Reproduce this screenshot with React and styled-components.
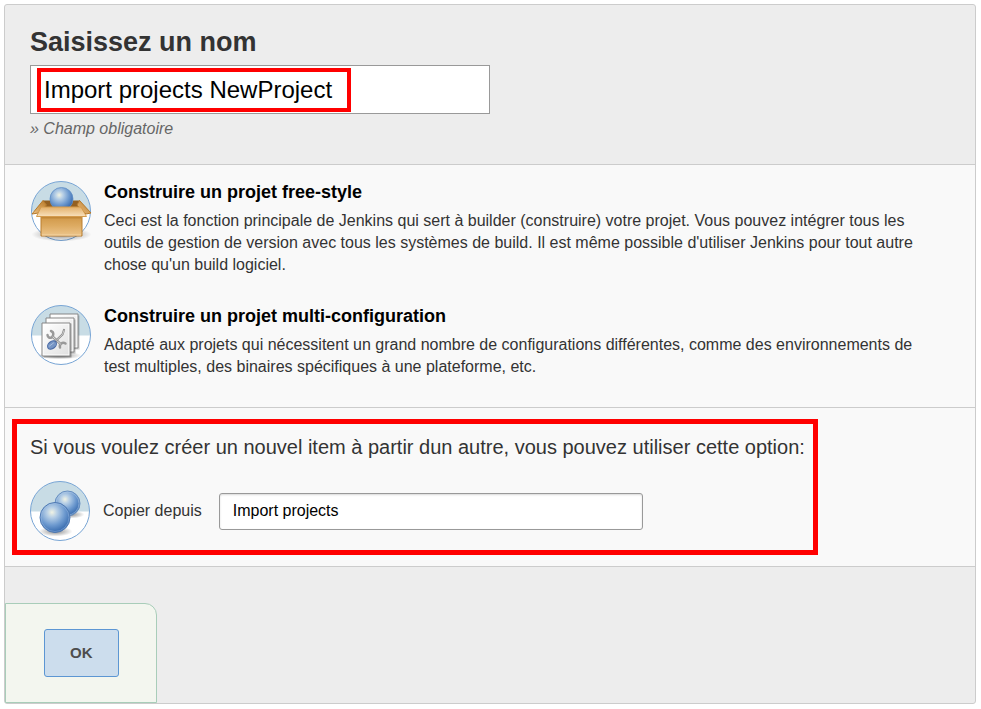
import React, { useState } from "react";
import styled, { createGlobalStyle } from "styled-components";

const items = [
  {
    id: "freestyle",
    name: "Construire un projet free-style",
    text: "Ceci est la fonction principale de Jenkins qui sert à builder (construire) votre projet. Vous pouvez intégrer tous les outils de gestion de version avec tous les systèmes de build. Il est même possible d'utiliser Jenkins pour tout autre chose qu'un build logiciel.",
    icon: <BoxIcon />,
  },
  {
    id: "matrix",
    name: "Construire un projet multi-configuration",
    text: "Adapté aux projets qui nécessitent un grand nombre de configurations différentes, comme des environnements de test multiples, des binaires spécifiques à une plateforme, etc.",
    icon: <PagesIcon />,
  },
];

function Disc({ id, children }) {
  return (
    <Icon viewBox="0.5 0.5 60 60" aria-hidden="true">
      <defs>
        <clipPath id={`${id}-clip`}>
          <circle cx="30.5" cy="30.5" r="29.5" />
        </clipPath>
        <radialGradient id={`${id}-ball`} cx="0.4" cy="0.33" r="0.68">
          <stop offset="0" stopColor="#f1f3e4" />
          <stop offset="0.25" stopColor="#b7cfe6" />
          <stop offset="0.62" stopColor="#6f9bd0" />
          <stop offset="1" stopColor="#3468ad" />
        </radialGradient>
        <radialGradient id={`${id}-shadow`}>
          <stop offset="0" stopColor="#000" stopOpacity="0.45" />
          <stop offset="1" stopColor="#000" stopOpacity="0" />
        </radialGradient>
      </defs>
      <g clipPath={`url(#${id}-clip)`}>
        <rect width="62" height="62" fill="#fff" />
        <rect width="62" height="31" fill="#c8dce5" />
      </g>
      <circle cx="30.5" cy="30.5" r="29.5" fill="none" stroke="#78a5d5" />
      {children}
    </Icon>
  );
}

function BoxIcon() {
  return (
    <Disc id="box">
      <defs>
        <linearGradient id="box-front" x1="0" y1="0" x2="0" y2="1">
          <stop offset="0" stopColor="#cf9544" />
          <stop offset="0.5" stopColor="#ddab62" />
          <stop offset="1" stopColor="#edc58c" />
        </linearGradient>
        <linearGradient id="box-flap" x1="0" y1="0" x2="0" y2="1">
          <stop offset="0" stopColor="#e3b06a" />
          <stop offset="1" stopColor="#f8e0bc" />
        </linearGradient>
        <linearGradient id="box-side" x1="1" y1="0" x2="0" y2="1">
          <stop offset="0" stopColor="#b97a28" />
          <stop offset="1" stopColor="#ecc084" />
        </linearGradient>
      </defs>
      <ellipse cx="31" cy="54" rx="30" ry="7" fill="url(#box-shadow)" />
      <path d="M12.5 20h37l2 8h-41z" fill="#946021" />
      <path d="M12.5 20l-11 13.500 6.500-1 8-8z" fill="url(#box-side)" stroke="#b57a2c" />
      <path d="M49 20l11.500 12.500-5 1-9-9z" fill="url(#box-side)" stroke="#b57a2c" />
      <circle cx="31" cy="18.500" r="11.500" fill="url(#box-ball)" stroke="#618fc7" strokeWidth="0.8" />
      <path d="M10.500 35h41v20.500h-41z" fill="url(#box-front)" stroke="#b97f30" />
      <path d="M11.500 54.500h39" stroke="#f3d4a5" />
      <path d="M11.500 36h39v2h-39z" fill="#b77c2d" opacity="0.6" />
      <path d="M10.500 26.500h40l5.500 9.500h-50z" fill="url(#box-flap)" stroke="#d49b4d" />
    </Disc>
  );
}

function PagesIcon() {
  return (
    <Disc id="pages">
      <defs>
        <linearGradient id="pages-paper" x1="0" y1="0" x2="1" y2="1">
          <stop offset="0" stopColor="#fff" />
          <stop offset="1" stopColor="#e1e1e1" />
        </linearGradient>
      </defs>
      <ellipse cx="29" cy="51" rx="22" ry="4" fill="url(#pages-shadow)" />
      <g stroke="#858585" fill="#fff">
        <path d="M21 11h28v34H21z" stroke="none" fill="#000" opacity="0.2" />
        <path d="M19.500 9.500h28v34h-28z" />
        <path d="M21 11h25v31H21z" stroke="none" fill="url(#pages-paper)" />
        <path d="M17 15h28v34H17z" stroke="none" fill="#000" opacity="0.25" />
        <path d="M15.500 13.500h28v34h-28z" />
        <path d="M17 15h25v31H17z" stroke="none" fill="url(#pages-paper)" />
        <path d="M13 19h28v34H13z" stroke="none" fill="#000" opacity="0.3" />
        <path d="M11.500 18.500h28v33h-28z" />
        <path d="M13 20h25v30H13z" stroke="none" fill="url(#pages-paper)" />
      </g>
      <g fill="none" strokeLinecap="round">
        <path
          d="M20.500 26.500c3 1 3 5 .5 6.500-2 .8-3.800-.4-4-2.500M22.500 32.500l7.500 7M29.500 43c-1-3.500 2.500-6 5.500-4"
          stroke="#999"
          strokeWidth="2.500"
        />
        <path d="M22.500 32.500l7.500 7" stroke="#d9d9d9" />
        <path d="M23 38.500l9-8.500 1.500-4.500" stroke="#8a8a8a" strokeWidth="2.200" />
        <path d="M24 37.500l8-7.500 1.500-4" stroke="#ddd" strokeWidth="0.800" />
      </g>
      <ellipse
        cx="21.500"
        cy="40.500"
        rx="5"
        ry="3.500"
        transform="rotate(-38 21.500 40.500)"
        fill="#7695c5"
        stroke="#4a6aa5"
      />
      <path d="M19 41.500l4-3" stroke="#a9bfdf" strokeLinecap="round" />
    </Disc>
  );
}

function CopyIcon() {
  return (
    <Disc id="copy">
      <ellipse cx="41" cy="34" rx="14" ry="4" fill="url(#copy-shadow)" />
      <circle cx="38" cy="23" r="12.500" fill="url(#copy-ball)" stroke="#658dbf" />
      <circle cx="38" cy="23" r="11.500" fill="none" stroke="#b8cfe9" opacity="0.5" />
      <ellipse cx="26" cy="51" rx="17" ry="5" fill="url(#copy-shadow)" />
      <circle cx="25.500" cy="37" r="15" fill="url(#copy-ball)" stroke="#4e79b2" />
      <circle cx="25.500" cy="37" r="14" fill="none" stroke="#a9c6e8" opacity="0.4" />
    </Disc>
  );
}

const NewItem = () => {
  const [name, setName] = useState("Import projects NewProject");
  const [from, setFrom] = useState("Import projects");

  return (
    <>
      <GlobalStyle />
      <Panel onSubmit={(e) => e.preventDefault()}>
        <NameSection>
          <Title htmlFor="name">Saisissez un nom</Title>
          <NameField>
            <NameInput
              id="name"
              type="text"
              autoComplete="off"
              spellCheck={false}
              value={name}
              onChange={(e) => setName(e.target.value)}
            />
            <Highlight />
          </NameField>
          <Hint>» Champ obligatoire</Hint>
        </NameSection>
        <Categories>
          {items.map((elm) => (
            <Item key={elm.id}>
              {elm.icon}
              <div>
                <ItemName>{elm.name}</ItemName>
                <ItemText>{elm.text}</ItemText>
              </div>
            </Item>
          ))}
        </Categories>
        <CopySection>
          <CopyBox>
            <CopyTitle>
              Si vous voulez créer un nouvel item à partir dun autre, vous
              pouvez utiliser cette option:
            </CopyTitle>
            <CopyRow>
              <CopyIcon />
              <CopyLabel htmlFor="from">Copier depuis</CopyLabel>
              <CopyInput
                id="from"
                type="text"
                autoComplete="off"
                spellCheck={false}
                value={from}
                onChange={(e) => setFrom(e.target.value)}
              />
            </CopyRow>
          </CopyBox>
        </CopySection>
        <Footer>
          <ButtonBox>
            <OkButton type="submit">OK</OkButton>
          </ButtonBox>
        </Footer>
      </Panel>
    </>
  );
};
export default NewItem;

const GlobalStyle = createGlobalStyle`
  * {
    box-sizing: border-box;
  }
  body {
    margin: 4px;
    background: #fff;
    color: #333;
    font-family: "Liberation Sans", Arial, sans-serif;
    font-size: 16px;
    line-height: 22px;
  }
  input,
  button {
    font-family: inherit;
  }
  h2,
  p {
    margin: 0;
  }
`;

const Panel = styled.form`
  margin-right: 1px;
  border: 1px solid #ccc;
  border-radius: 3px;
  background: #ededed;
`;

const NameSection = styled.div`
  padding: 21px 25px 24px;
`;

const Title = styled.label`
  display: block;
  padding-bottom: 7px;
  font-size: 27px;
  font-weight: bold;
  line-height: 32px;
`;

const NameField = styled.div`
  position: relative;
  max-width: 460px;
`;

const NameInput = styled.input`
  display: block;
  width: 100%;
  height: 49px;
  padding: 10px 13px;
  border: 1px solid #999;
  background: #fff;
  color: #000;
  font-size: 24px;
`;

const Highlight = styled.span`
  position: absolute;
  top: 3px;
  left: 7px;
  width: 314px;
  height: 44px;
  border: 4px solid #f00;
  pointer-events: none;
`;

const Hint = styled.p`
  padding-top: 4px;
  color: #666;
  font-style: italic;
`;

const Categories = styled.div`
  display: flex;
  flex-direction: column;
  gap: 29px;
  padding: 16px 40px 29px 26px;
  border-top: 1px solid #ccc;
  background: #f9f9f9;
`;

const Item = styled.div`
  display: flex;
  gap: 13px;
`;

const Icon = styled.svg`
  flex: none;
  width: 60px;
  height: 60px;
  overflow: visible;
`;

const ItemName = styled.h2`
  color: #000;
  font-size: 18px;
  line-height: 22px;
`;

const ItemText = styled.p`
  padding-top: 7px;
`;

const CopySection = styled.div`
  padding: 11px 7px;
  border-top: 1px solid #ccc;
  border-bottom: 1px solid #ccc;
  background: #f9f9f9;
`;

const CopyBox = styled.div`
  max-width: 806px;
  padding: 12px 8px 9px 13px;
  border: 5px solid #f00;
`;

const CopyTitle = styled.p`
  font-size: 20px;
`;

const CopyRow = styled.div`
  display: flex;
  align-items: center;
  padding-top: 23px;
`;

const CopyLabel = styled.label`
  flex: none;
  padding: 0 17px 0 13px;
`;

const CopyInput = styled.input`
  flex: 0 1 424px;
  min-width: 0;
  height: 37px;
  padding: 6px 13px;
  border: 1px solid #999;
  border-radius: 3px;
  background: #fff;
  box-shadow: inset 0 1px 2px rgba(0, 0, 0, 0.15);
  color: #000;
  font-size: 16px;
`;

const Footer = styled.div`
  padding-top: 36px;
`;

const ButtonBox = styled.div`
  width: fit-content;
  padding: 25px 37px 25px 38px;
  border: 1px solid #a8cdb9;
  border-radius: 0 12px 0 0;
  background: #f3f6ef;
`;

const OkButton = styled.button`
  display: block;
  padding: 12px 25px;
  border: 1px solid #5c96d3;
  border-radius: 3px;
  background: #ccdded;
  color: #4d4d4d;
  font-size: 15px;
  font-weight: bold;
  line-height: 22px;
  cursor: pointer;
`;
